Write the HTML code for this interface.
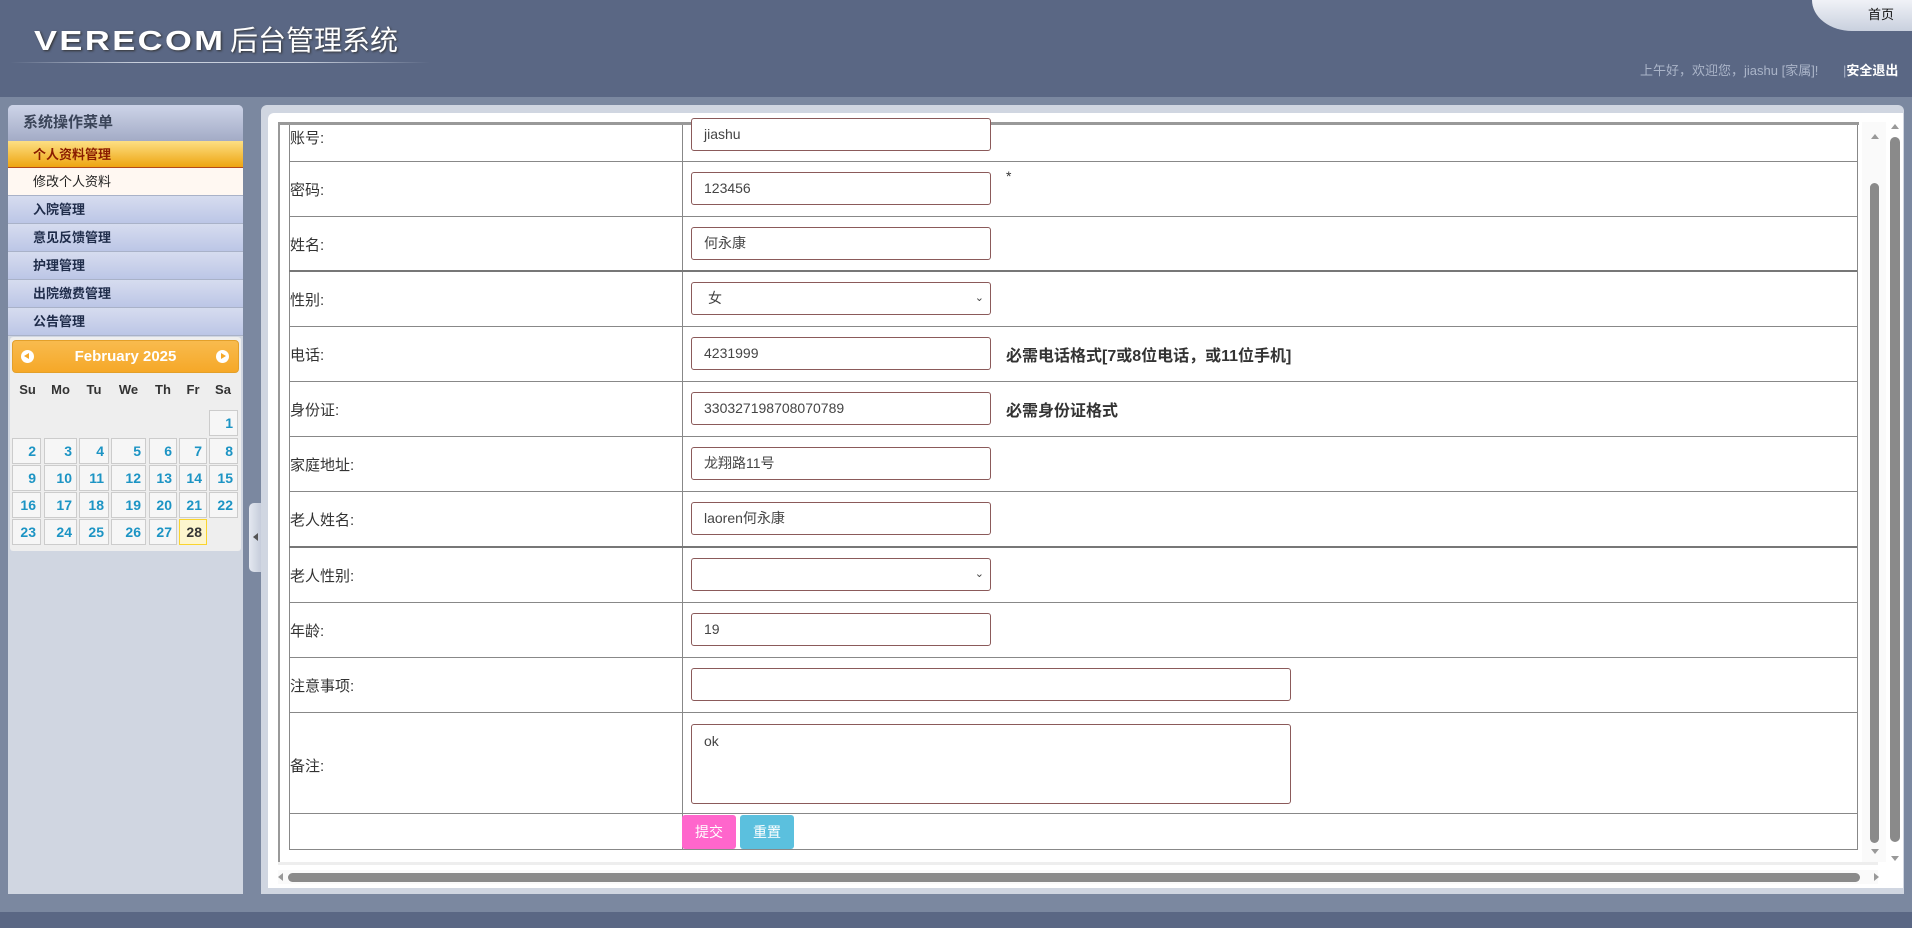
<!DOCTYPE html>
<html><head><meta charset="utf-8"><style>
*{margin:0;padding:0;box-sizing:border-box}
body{width:1912px;height:928px;background:#5a6784;position:relative;overflow:hidden;font-family:"Liberation Sans","Noto Sans CJK SC",sans-serif}
.a{position:absolute}
.mi{position:absolute;left:8px;width:235px;height:28px;line-height:27px;padding-left:25px;font-size:13px;font-weight:bold;color:#1f2c4a;background:linear-gradient(#d6dcef,#bcc6e6);border-bottom:1px solid #a9b2c8}
.cell{position:absolute;height:26px;background:#f6f6f6;border:1px solid #ccc;color:#1c94c4;font-weight:bold;font-size:14px;text-align:right;padding-right:4px;line-height:24px}
.row{position:absolute;left:289px;width:1568px;border-bottom:1px solid #888}
.lab{position:absolute;left:1px;font-size:15px;color:#333}
.inp{position:absolute;left:402px;width:300px;height:33px;border:1px solid #8b5a5a;border-radius:3px;background:#fff;font-size:14px;color:#444;padding-left:12px;line-height:31px}
</style></head><body>
<div class="a" style="left:0;top:0;width:1912px;height:97px;background:#5a6784"></div>
<div class="a" style="left:34px;top:25px;font-size:28px;font-weight:bold;color:#fff;letter-spacing:2px;font-family:'Liberation Sans',sans-serif;transform:scaleX(1.23);transform-origin:left;text-shadow:1px 1px 2px #333">VERECOM</div>
<div class="a" style="left:230px;top:19px;font-size:28px;color:#fff;text-shadow:1px 1px 2px #333">后台管理系统</div>
<div class="a" style="left:10px;top:62px;width:420px;height:1px;background:linear-gradient(90deg,rgba(255,255,255,0),#c8cfdc 30%,#c8cfdc 70%,rgba(255,255,255,0))"></div>
<div class="a" style="left:1812px;top:0;width:100px;height:31px;background:linear-gradient(#f0f2f7,#c9d0de);border-bottom-left-radius:40px 31px"></div>
<div class="a" style="left:1868px;top:4px;font-size:13px;color:#111">首页</div>
<div class="a" style="left:1640px;top:60px;font-size:13px;color:#aab4c8">上午好，欢迎您，jiashu [家属]!</div>
<div class="a" style="left:1843px;top:60px;font-size:13px;color:#fff;font-weight:bold"><span style="color:#aab4c8;font-weight:normal">|</span>安全退出</div>
<div class="a" style="left:0;top:97px;width:1912px;height:815px;background:#7b88a0"></div>
<div class="a" style="left:8px;top:105px;width:235px;height:789px;background:#d0d6e1;border-radius:5px 5px 0 0"></div>
<div class="a" style="left:8px;top:105px;width:235px;height:36px;background:linear-gradient(#cdd4e8,#a3abc6);border-radius:5px 5px 0 0;font-size:15px;font-weight:bold;color:#3a4458;padding-left:15px;line-height:36px">系统操作菜单</div>
<div class="a" style="left:8px;top:141px;width:235px;height:27px;background:linear-gradient(#fddf84,#eea511);border-bottom:1px solid #b44a1a;font-size:13px;font-weight:bold;color:#8a1c00;padding-left:25px;line-height:27px">个人资料管理</div>
<div class="a" style="left:8px;top:168px;width:235px;height:28px;background:#fff8f2;border-bottom:1px solid #a9b2c8;font-size:13px;color:#222;padding-left:25px;line-height:27px">修改个人资料</div>
<div class="mi" style="top:196px">入院管理</div>
<div class="mi" style="top:224px">意见反馈管理</div>
<div class="mi" style="top:252px">护理管理</div>
<div class="mi" style="top:280px">出院缴费管理</div>
<div class="mi" style="top:308px">公告管理</div>
<div class="a" style="left:10px;top:337px;width:231px;height:214px;background:#eee;border-radius:3px"></div>
<div class="a" style="left:12px;top:340px;width:227px;height:33px;background:linear-gradient(#f8bb4e,#f6a828);border:1px solid #e3a02a;border-radius:4px;color:#fff;font-weight:bold;font-size:15px;text-align:center;line-height:31px">February 2025</div>
<div class="a" style="left:21px;top:350px;width:13px;height:13px;border-radius:50%;background:#fff"></div>
<div class="a" style="left:24px;top:353px;width:0;height:0;border-top:3.5px solid transparent;border-bottom:3.5px solid transparent;border-right:5px solid #f6a828"></div>
<div class="a" style="left:216px;top:350px;width:13px;height:13px;border-radius:50%;background:#fff"></div>
<div class="a" style="left:221px;top:353px;width:0;height:0;border-top:3.5px solid transparent;border-bottom:3.5px solid transparent;border-left:5px solid #f6a828"></div>
<div class="a" style="left:12px;top:382px;width:227px;font-size:13px;font-weight:bold;color:#333;display:flex">
<span style="width:31px;text-align:center">Su</span><span style="width:35px;text-align:center">Mo</span><span style="width:32px;text-align:center">Tu</span><span style="width:37px;text-align:center">We</span><span style="width:32px;text-align:center">Th</span><span style="width:28px;text-align:center">Fr</span><span style="width:32px;text-align:center">Sa</span></div>
<div class="cell" style="left:209px;top:410px;width:29px">1</div>
<div class="cell" style="left:12px;top:438px;width:29px">2</div><div class="cell" style="left:44px;top:438px;width:33px">3</div><div class="cell" style="left:79px;top:438px;width:30px">4</div><div class="cell" style="left:111px;top:438px;width:35px">5</div><div class="cell" style="left:149px;top:438px;width:28px">6</div><div class="cell" style="left:179px;top:438px;width:28px">7</div><div class="cell" style="left:209px;top:438px;width:29px">8</div>
<div class="cell" style="left:12px;top:465px;width:29px">9</div><div class="cell" style="left:44px;top:465px;width:33px">10</div><div class="cell" style="left:79px;top:465px;width:30px">11</div><div class="cell" style="left:111px;top:465px;width:35px">12</div><div class="cell" style="left:149px;top:465px;width:28px">13</div><div class="cell" style="left:179px;top:465px;width:28px">14</div><div class="cell" style="left:209px;top:465px;width:29px">15</div>
<div class="cell" style="left:12px;top:492px;width:29px">16</div><div class="cell" style="left:44px;top:492px;width:33px">17</div><div class="cell" style="left:79px;top:492px;width:30px">18</div><div class="cell" style="left:111px;top:492px;width:35px">19</div><div class="cell" style="left:149px;top:492px;width:28px">20</div><div class="cell" style="left:179px;top:492px;width:28px">21</div><div class="cell" style="left:209px;top:492px;width:29px">22</div>
<div class="cell" style="left:12px;top:519px;width:29px">23</div><div class="cell" style="left:44px;top:519px;width:33px">24</div><div class="cell" style="left:79px;top:519px;width:30px">25</div><div class="cell" style="left:111px;top:519px;width:35px">26</div><div class="cell" style="left:149px;top:519px;width:28px">27</div><div class="cell" style="left:179px;top:519px;width:28px;background:#fdf5ce;border-color:#fad42e;color:#363636">28</div>
<div class="a" style="left:249px;top:503px;width:12px;height:69px;background:linear-gradient(90deg,#e4e8f0,#c6cddb);border-radius:5px 0 0 5px"></div>
<div class="a" style="left:253px;top:533px;width:0;height:0;border-top:4px solid transparent;border-bottom:4px solid transparent;border-right:5px solid #555"></div>
<div class="a" style="left:261px;top:105px;width:1643px;height:789px;background:#d0d6e1;border-radius:6px 6px 0 0"></div>
<div class="a" style="left:268px;top:113px;width:1635px;height:775px;background:#fff;border-radius:6px 0 0 0"></div>
<div class="a" style="left:278px;top:122px;width:1581px;height:740px;overflow:hidden;border-left:2px solid #999;border-top:3px solid #999">
 <div class="a" style="left:9px;top:-18px;width:1570px;height:760px">
  <div class="a" style="left:0;top:0;width:1px;height:743px;background:#888"></div>
  <div class="a" style="left:1568px;top:0;width:1px;height:743px;background:#888"></div>
  <div class="a" style="left:393px;top:0;width:1px;height:743px;background:#888"></div>
 </div>
</div>
<div class="row" style="top:125px;height:37px"><div class="lab" style="top:2px">账号:</div><div class="inp" style="top:-7px">jiashu</div></div>
<div class="row" style="top:162px;height:55px"><div class="lab" style="top:17px">密码:</div><div class="inp" style="top:10px">123456</div><div class="a" style="left:717px;top:6px;font-size:14px;color:#333">*</div></div>
<div class="row" style="top:217px;height:55px;border-bottom:2px solid #777"><div class="lab" style="top:17px">姓名:</div><div class="inp" style="top:10px">何永康</div></div>
<div class="row" style="top:272px;height:55px"><div class="lab" style="top:17px">性别:</div><div class="inp" style="top:10px;padding-left:16px">女<span style="position:absolute;right:6px;top:0;font-size:11px">&#8964;</span></div></div>
<div class="row" style="top:327px;height:55px"><div class="lab" style="top:17px">电话:</div><div class="inp" style="top:10px">4231999</div><div class="a" style="left:717px;top:15px;font-size:16px;font-weight:bold;color:#333">必需电话格式[7或8位电话，或11位手机]</div></div>
<div class="row" style="top:382px;height:55px"><div class="lab" style="top:17px">身份证:</div><div class="inp" style="top:10px">330327198708070789</div><div class="a" style="left:717px;top:15px;font-size:16px;font-weight:bold;color:#333">必需身份证格式</div></div>
<div class="row" style="top:437px;height:55px"><div class="lab" style="top:17px">家庭地址:</div><div class="inp" style="top:10px">龙翔路11号</div></div>
<div class="row" style="top:492px;height:56px;border-bottom:2px solid #777"><div class="lab" style="top:17px">老人姓名:</div><div class="inp" style="top:10px">laoren何永康</div></div>
<div class="row" style="top:548px;height:55px"><div class="lab" style="top:17px">老人性别:</div><div class="inp" style="top:10px"><span style="position:absolute;right:6px;top:0;font-size:11px">&#8964;</span></div></div>
<div class="row" style="top:603px;height:55px"><div class="lab" style="top:17px">年龄:</div><div class="inp" style="top:10px">19</div></div>
<div class="row" style="top:658px;height:55px"><div class="lab" style="top:17px">注意事项:</div><div class="inp" style="top:10px;width:600px"></div></div>
<div class="row" style="top:713px;height:101px"><div class="lab" style="top:42px">备注:</div><div class="inp" style="top:11px;width:600px;height:80px;line-height:20px;padding-top:6px">ok</div></div>
<div class="row" style="top:814px;height:36px"><div class="a" style="left:393px;top:1px;width:54px;height:34px;background:#ff66cc;border-radius:3px;color:#fff;font-size:14px;text-align:center;line-height:34px">提交</div><div class="a" style="left:451px;top:1px;width:54px;height:34px;background:#5bc0de;border-radius:3px;color:#fff;font-size:14px;text-align:center;line-height:34px">重置</div></div>
<div class="a" style="left:278px;top:862px;width:1600px;height:3px;background:#eee"></div>
<div class="a" style="left:1862px;top:122px;width:24px;height:740px;background:#fafafa"></div>
<div class="a" style="left:1871px;top:134px;width:0;height:0;border-left:4px solid transparent;border-right:4px solid transparent;border-bottom:5px solid #999"></div>
<div class="a" style="left:1870px;top:183px;width:9px;height:660px;background:#8a8a8a;border-radius:5px"></div>
<div class="a" style="left:1871px;top:849px;width:0;height:0;border-left:4px solid transparent;border-right:4px solid transparent;border-top:5px solid #999"></div>
<div class="a" style="left:1891px;top:124px;width:0;height:0;border-left:4px solid transparent;border-right:4px solid transparent;border-bottom:5px solid #999"></div>
<div class="a" style="left:1890px;top:137px;width:10px;height:705px;background:#8a8a8a;border-radius:5px"></div>
<div class="a" style="left:1891px;top:856px;width:0;height:0;border-left:4px solid transparent;border-right:4px solid transparent;border-top:5px solid #999"></div>
<div class="a" style="left:278px;top:870px;width:1600px;height:14px;background:#fafafa"></div>
<div class="a" style="left:278px;top:873px;width:0;height:0;border-top:4px solid transparent;border-bottom:4px solid transparent;border-right:5px solid #999"></div>
<div class="a" style="left:288px;top:873px;width:1572px;height:9px;background:#8a8a8a;border-radius:5px"></div>
<div class="a" style="left:1874px;top:873px;width:0;height:0;border-top:4px solid transparent;border-bottom:4px solid transparent;border-left:5px solid #999"></div>
</body></html>
